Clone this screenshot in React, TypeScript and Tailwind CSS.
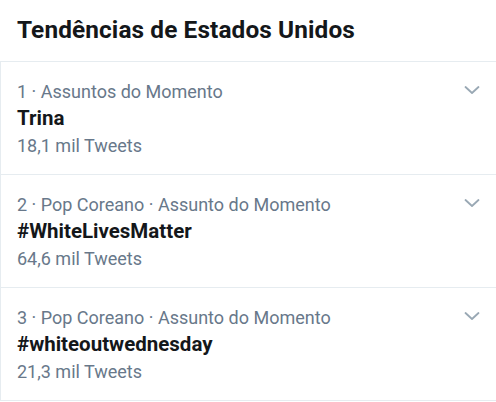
const trends = [
  { meta: '1 · Assuntos do Momento', title: 'Trina', count: '18,1 mil Tweets' },
  { meta: '2 · Pop Coreano · Assunto do Momento', title: '#WhiteLivesMatter', count: '64,6 mil Tweets' },
  { meta: '3 · Pop Coreano · Assunto do Momento', title: '#whiteoutwednesday', count: '21,3 mil Tweets' },
];

function Chevron() {
  return (
    <svg width="16" height="10" viewBox="0 0 16 10" fill="none" className="text-[#99a8b4]">
      <path d="M1.5 2l6.5 6 6.5-6" stroke="currentColor" strokeWidth="1.8" strokeLinecap="round" strokeLinejoin="round" />
    </svg>
  );
}

export default function App() {
  return (
    <div className="w-[496px] h-[402px] bg-white overflow-hidden font-['Roboto',sans-serif]">
      <div className="h-[61px] flex items-center px-[17px]">
        <h1 className="text-[24.4px] font-bold text-[#14171a] tracking-[0.1px]">Tendências de Estados Unidos</h1>
      </div>
      <div className="border-l border-t border-[#e6ecf0]">
        {trends.map((t) => (
          <div key={t.title} className="h-[113px] border-b border-[#e6ecf0] flex pl-4 pr-[16px] pt-[16px]">
            <div className="flex-1 flex flex-col">
              <div className="text-[18px] leading-[27px] text-[#68788a]">{t.meta}</div>
              <div className="text-[20.5px] leading-[27px] font-bold text-[#14171a]">{t.title}</div>
              <div className="text-[18px] leading-[27px] text-[#68788a]">{t.count}</div>
            </div>
            <div className="pt-[7px]">
              <Chevron />
            </div>
          </div>
        ))}
      </div>
    </div>
  );
}
